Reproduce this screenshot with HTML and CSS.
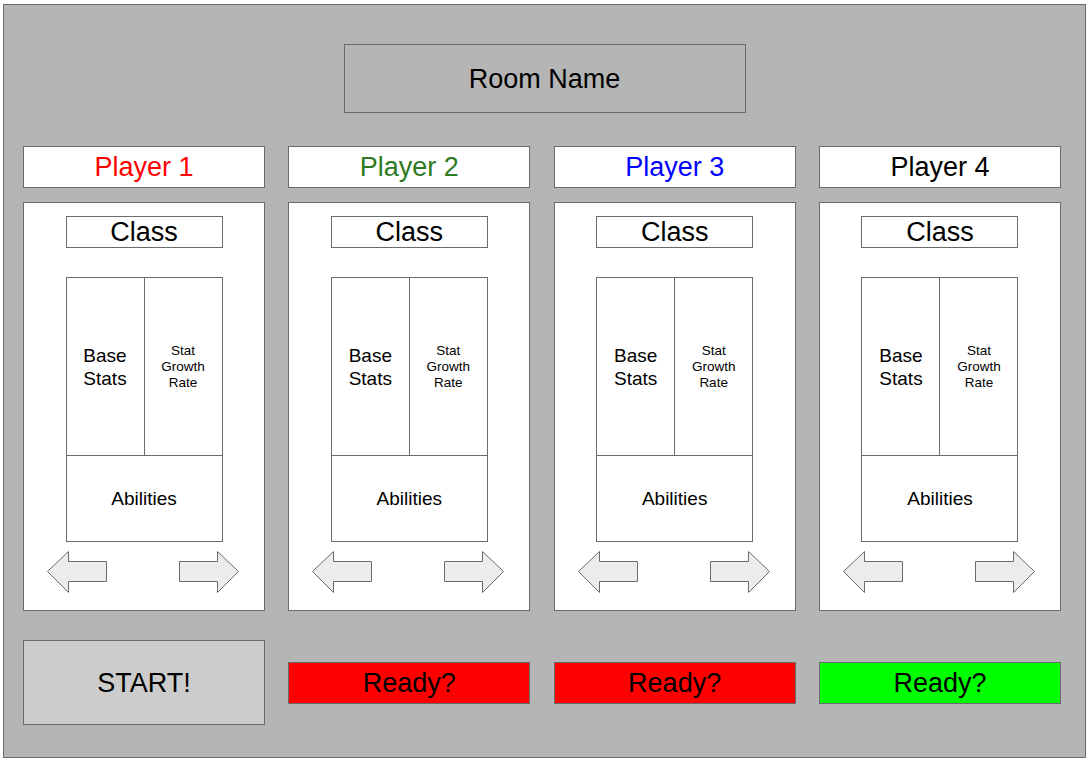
FILE: index.html
```html
<!DOCTYPE html>
<html lang="en">
<head>
    <meta charset="UTF-8">
    <meta name="viewport" content="width=device-width, initial-scale=1.0">
    <title>Lobby</title>
    <link rel="stylesheet" href="styles.css">
</head>
<body>
    <div class="lobby">
        <div class="room-name">Room Name</div>

        <div class="players">
            <div class="player">
                <div class="player-name p1">Player 1</div>
                <div class="player-card">
                    <div class="class-box">Class</div>
                    <div class="stats-box">
                        <div class="cell base">Base<br>Stats</div>
                        <div class="cell growth">Stat<br>Growth<br>Rate</div>
                        <div class="cell abilities">Abilities</div>
                    </div>
                    <div class="arrows">
                        <svg class="arrow" width="61" height="42" viewBox="0 0 61 42"><polygon points="0.5,20.5 21.5,0.5 21.5,10.5 59.5,10.5 59.5,30.5 21.5,30.5 21.5,41.5"/></svg>
                        <svg class="arrow" width="61" height="42" viewBox="0 0 61 42"><polygon points="60.5,20.5 39.5,0.5 39.5,10.5 1.5,10.5 1.5,30.5 39.5,30.5 39.5,41.5"/></svg>
                    </div>
                </div>
                <div class="player-foot">
                    <div class="start-btn">START!</div>
                </div>
            </div>

            <div class="player">
                <div class="player-name p2">Player 2</div>
                <div class="player-card">
                    <div class="class-box">Class</div>
                    <div class="stats-box">
                        <div class="cell base">Base<br>Stats</div>
                        <div class="cell growth">Stat<br>Growth<br>Rate</div>
                        <div class="cell abilities">Abilities</div>
                    </div>
                    <div class="arrows">
                        <svg class="arrow" width="61" height="42" viewBox="0 0 61 42"><polygon points="0.5,20.5 21.5,0.5 21.5,10.5 59.5,10.5 59.5,30.5 21.5,30.5 21.5,41.5"/></svg>
                        <svg class="arrow" width="61" height="42" viewBox="0 0 61 42"><polygon points="60.5,20.5 39.5,0.5 39.5,10.5 1.5,10.5 1.5,30.5 39.5,30.5 39.5,41.5"/></svg>
                    </div>
                </div>
                <div class="player-foot">
                    <div class="ready-btn not-ready">Ready?</div>
                </div>
            </div>

            <div class="player">
                <div class="player-name p3">Player 3</div>
                <div class="player-card">
                    <div class="class-box">Class</div>
                    <div class="stats-box">
                        <div class="cell base">Base<br>Stats</div>
                        <div class="cell growth">Stat<br>Growth<br>Rate</div>
                        <div class="cell abilities">Abilities</div>
                    </div>
                    <div class="arrows">
                        <svg class="arrow" width="61" height="42" viewBox="0 0 61 42"><polygon points="0.5,20.5 21.5,0.5 21.5,10.5 59.5,10.5 59.5,30.5 21.5,30.5 21.5,41.5"/></svg>
                        <svg class="arrow" width="61" height="42" viewBox="0 0 61 42"><polygon points="60.5,20.5 39.5,0.5 39.5,10.5 1.5,10.5 1.5,30.5 39.5,30.5 39.5,41.5"/></svg>
                    </div>
                </div>
                <div class="player-foot">
                    <div class="ready-btn not-ready">Ready?</div>
                </div>
            </div>

            <div class="player">
                <div class="player-name p4">Player 4</div>
                <div class="player-card">
                    <div class="class-box">Class</div>
                    <div class="stats-box">
                        <div class="cell base">Base<br>Stats</div>
                        <div class="cell growth">Stat<br>Growth<br>Rate</div>
                        <div class="cell abilities">Abilities</div>
                    </div>
                    <div class="arrows">
                        <svg class="arrow" width="61" height="42" viewBox="0 0 61 42"><polygon points="0.5,20.5 21.5,0.5 21.5,10.5 59.5,10.5 59.5,30.5 21.5,30.5 21.5,41.5"/></svg>
                        <svg class="arrow" width="61" height="42" viewBox="0 0 61 42"><polygon points="60.5,20.5 39.5,0.5 39.5,10.5 1.5,10.5 1.5,30.5 39.5,30.5 39.5,41.5"/></svg>
                    </div>
                </div>
                <div class="player-foot">
                    <div class="ready-btn is-ready">Ready?</div>
                </div>
            </div>
        </div>
    </div>
</body>
</html>
```

FILE: styles.css
```css
* {
    margin: 0;
    padding: 0;
    box-sizing: border-box;
}

body {
    font-family: 'Liberation Sans', Arial, sans-serif;
    background: #ffffff;
    color: #000000;
}

.lobby {
    margin: 4px 0 0 3px;
    width: 1083px;
    height: 754px;
    border: 1px solid #6b6b6b;
    background: #b5b5b5;
    padding-top: 39px;
}

.room-name {
    width: 402px;
    height: 69px;
    margin: 0 auto;
    border: 1px solid #6b6b6b;
    font-size: 27px;
    line-height: 68px;
    text-align: center;
}

.players {
    display: grid;
    grid-template-columns: repeat(4, 242px);
    column-gap: 23.33px;
    margin: 33px 0 0 19px;
}

.player {
    display: flex;
    flex-direction: column;
}

.player-name {
    height: 42px;
    background: #ffffff;
    border: 1px solid #6b6b6b;
    font-size: 27px;
    line-height: 41px;
    text-align: center;
    margin-bottom: 14px;
}

.p1 { color: #ff0000; }
.p2 { color: #2f7a1f; }
.p3 { color: #0000ff; }
.p4 { color: #000000; }

.player-card {
    height: 409px;
    background: #ffffff;
    border: 1px solid #6b6b6b;
    padding-top: 13px;
}

.class-box {
    width: 157px;
    height: 32px;
    margin: 0 auto;
    border: 1px solid #6b6b6b;
    font-size: 27px;
    line-height: 31px;
    text-align: center;
}

.stats-box {
    width: 157px;
    height: 265px;
    margin: 29px auto 0;
    border: 1px solid #6b6b6b;
    display: grid;
    grid-template-columns: 78px 1fr;
    grid-template-rows: 178px 1fr;
}

.cell {
    display: flex;
    align-items: center;
    justify-content: center;
    text-align: center;
}

.base {
    font-size: 19px;
    line-height: 23px;
    border-right: 1px solid #6b6b6b;
    border-bottom: 1px solid #6b6b6b;
}

.growth {
    font-size: 13.5px;
    line-height: 16px;
    border-bottom: 1px solid #6b6b6b;
}

.abilities {
    grid-column: 1 / 3;
    font-size: 19px;
}

.arrows {
    display: flex;
    justify-content: space-between;
    padding: 0 25px 0 23px;
    margin-top: 9px;
}

.arrow polygon {
    fill: #ececec;
    stroke: #6b6b6b;
    stroke-width: 1;
}

.player-foot {
    height: 85px;
    margin-top: 29px;
    display: flex;
    align-items: center;
}

.start-btn {
    width: 100%;
    height: 85px;
    background: #cccccc;
    border: 1px solid #6b6b6b;
    font-size: 27px;
    line-height: 84px;
    text-align: center;
}

.ready-btn {
    width: 100%;
    height: 42px;
    border: 1px solid #6b6b6b;
    font-size: 27px;
    line-height: 41px;
    text-align: center;
}

.not-ready { background: #ff0000; }
.is-ready { background: #00ff00; }
```
